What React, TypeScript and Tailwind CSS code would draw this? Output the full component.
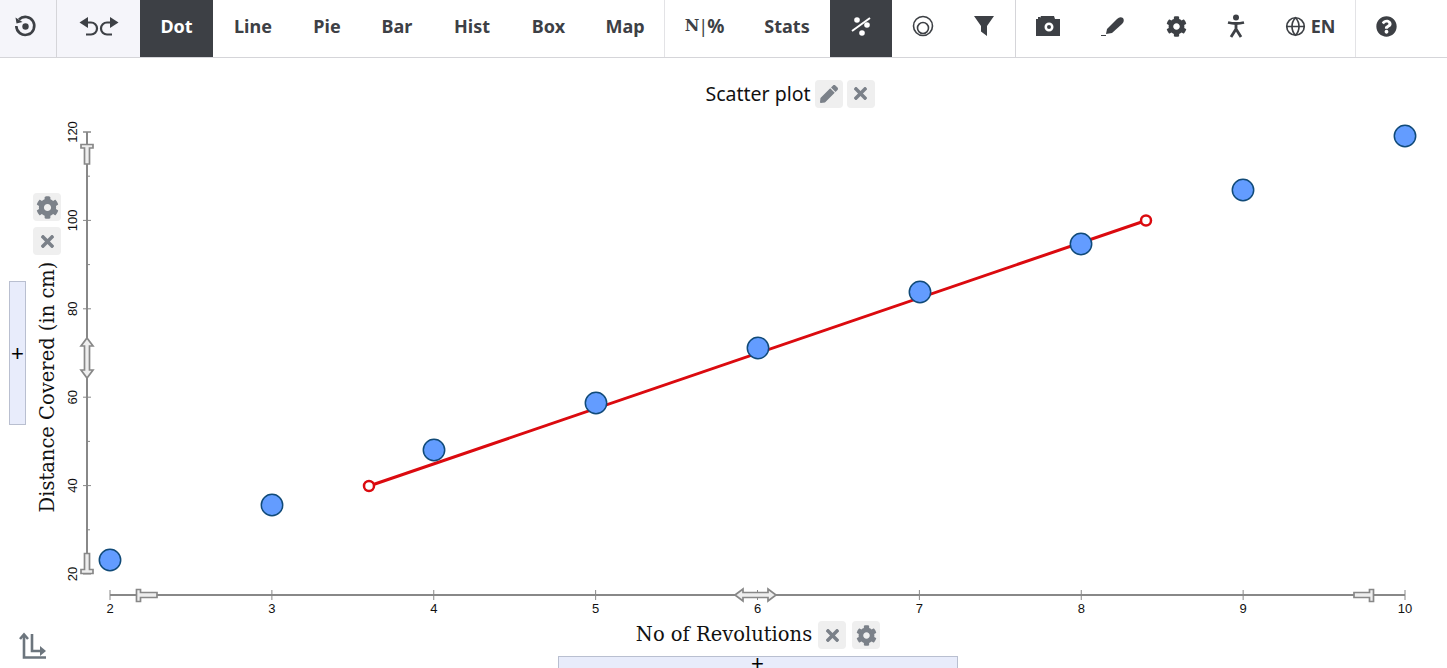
import { FaCog, FaPen, FaQuestionCircle, FaTimes } from "react-icons/fa";
import { Globe } from "lucide-react";
import type { ReactNode } from "react";

const sans = "font-['Noto_Sans',sans-serif]";

const chartTabs = [
  { label: "Dot", width: "w-[73px]", active: true },
  { label: "Line", width: "w-[80px]" },
  { label: "Pie", width: "w-[68px]" },
  { label: "Bar", width: "w-[72px]" },
  { label: "Hist", width: "w-[78px]" },
  { label: "Box", width: "w-[75px]" },
  { label: "Map", width: "w-[78px]" },
];

const points = [
  [110, 560],
  [272, 505],
  [434, 450],
  [596, 403],
  [758, 348],
  [920, 292],
  [1081, 244],
  [1243, 190],
  [1405, 136],
];

const xTicks = [2, 3, 4, 5, 6, 7, 8, 9, 10];
const yTicks = [20, 40, 60, 80, 100, 120];
const yMinor = [30, 50, 70, 90, 110];
const xPos = (v: number) => 110 + (v - 2) * 161.875;
const yPos = (v: number) => 574 - (v - 20) * 4.42;

function Tab({ width, active, children }: { width: string; active?: boolean; children: ReactNode }) {
  return (
    <button
      className={`${width} h-full pb-[5px] flex items-center justify-center shrink-0 ${
        active ? "bg-[#3d4045] text-white" : "text-[#3d4045]"
      }`}
    >
      {children}
    </button>
  );
}

function SmallButton({ children }: { children: ReactNode }) {
  return (
    <div className="w-7 h-7 rounded bg-[#efefef] text-[#7b8189] flex items-center justify-center shrink-0">
      {children}
    </div>
  );
}

function Handle({ d }: { d: string }) {
  return <path d={d} fill="#eeeeee" stroke="#888888" strokeWidth="1.7" />;
}

function Chart() {
  return (
    <svg width="1447" height="500" viewBox="0 120 1447 500" className="block">
      {/* y axis */}
      <line x1="87" y1="132" x2="87" y2="574" stroke="#888888" strokeWidth="2" />
      <line x1="83" y1="132" x2="91" y2="132" stroke="#888888" />
      {yTicks.map((v) => (
        <g key={v}>
          <line x1="83" y1={yPos(v)} x2="91" y2={yPos(v)} stroke="#888888" />
          <text
            transform={`translate(77 ${yPos(v)}) rotate(-90)`}
            textAnchor="middle"
            fontSize="13"
            fontFamily="'Liberation Sans', sans-serif"
            fill="#111111"
          >
            {v}
          </text>
        </g>
      ))}
      {yMinor.map((v) => (
        <line key={v} x1="87" y1={yPos(v)} x2="90" y2={yPos(v)} stroke="#888888" />
      ))}

      {/* x axis */}
      <line x1="110" y1="595" x2="1405" y2="595" stroke="#888888" strokeWidth="2" />
      {xTicks.map((v) => (
        <g key={v}>
          <line x1={xPos(v)} y1="590" x2={xPos(v)} y2="600" stroke="#888888" />
          <text
            x={xPos(v)}
            y="613"
            textAnchor="middle"
            fontSize="13"
            fontFamily="'Liberation Sans', sans-serif"
            fill="#111111"
          >
            {v}
          </text>
        </g>
      ))}

      {/* range handles */}
      <Handle d="M81 144.500h12v3.500h-3.500v16h-5v-16h-3.500z" />
      <Handle d="M84.500 553.500h5v16h3.500v4h-12v-4h3.500z" />
      <Handle d="M87 338l6 8h-3.500v24h3.500l-6 8l-6-8h3.500v-24h-3.500z" />
      <Handle d="M136.500 589.500h4v3h16.500v5h-16.500v4h-4z" />
      <Handle d="M1373.500 589.500h-4v3h-15.500v5h15.500v4h4z" />
      <Handle d="M735 595l8-6v3.500h25v-3.500l8 6l-8 6v-3.500h-25v3.500z" />

      {/* axis title */}
      <text
        transform="translate(54 387) rotate(-90)"
        textAnchor="middle"
        fontSize="19.500"
        fontFamily="'DejaVu Serif', serif"
        fill="#111111"
      >
        Distance Covered (in cm)
      </text>

      {/* regression line */}
      <line x1="369" y1="486" x2="1146" y2="220.500" stroke="#db0a0f" strokeWidth="3" />
      {points.map(([x, y]) => (
        <circle key={x} cx={x} cy={y} r="10.700" fill="#639cff" stroke="#104a78" strokeWidth="1.500" />
      ))}
      <circle cx="369" cy="486" r="5" fill="white" stroke="#db0a0f" strokeWidth="2.500" />
      <circle cx="1146" cy="220.500" r="5" fill="white" stroke="#db0a0f" strokeWidth="2.500" />
    </svg>
  );
}

export default function App() {
  return (
    <div className={`relative w-[1447px] h-[668px] overflow-hidden bg-white ${sans}`}>
      {/* Toolbar */}
      <div className="flex h-[58px] border-b border-[#d5d5d9] text-[18px] font-bold">
        <Tab width="w-[57px] pr-[6px] bg-[#f5f5fa] border-r border-[#d5d5d9]">
          <svg width="24" height="24" viewBox="0 0 24 24" fill="none" stroke="#3d4045" strokeWidth="2.600">
            <path d="M6 5.500A9 9 0 1 1 3.300 12" />
            <path d="M2.500 3.500l1 6l6-1.500z" fill="#3d4045" stroke="none" />
            <circle cx="12.500" cy="12.500" r="3.200" fill="#3d4045" stroke="none" />
          </svg>
        </Tab>
        <Tab width="w-[83px] bg-[#f5f5fa]">
          <svg width="40" height="22" viewBox="0 0 40 22" fill="none" stroke="#3d4045" strokeWidth="2.200">
            <path d="M8 7.500h4a6 6 0 0 1 0 12H7" />
            <path d="M9 2v11L0.500 7.500z" fill="#3d4045" stroke="none" />
            <path d="M32 7.500h-4a6 6 0 0 0 0 12h5" />
            <path d="M31 2v11L39.500 7.500z" fill="#3d4045" stroke="none" />
          </svg>
        </Tab>
        {chartTabs.map((t) => (
          <Tab key={t.label} width={t.width} active={t.active}>
            {t.label}
          </Tab>
        ))}
        <Tab width="w-[80px] border-l border-[#e3e3e6]">
          <span className="font-['DejaVu_Serif',serif] text-[16px]">N</span>
          <span className="-mx-[1px] font-normal">|</span>
          <span className="text-[19px]">%</span>
        </Tab>
        <Tab width="w-[86px]">Stats</Tab>
        <Tab width="w-[62px]" active>
          <svg width="22" height="22" viewBox="0 0 22 22" fill="white">
            <path d="M2 16L20 3" stroke="white" strokeWidth="2" />
            <circle cx="7" cy="5" r="2.800" />
            <circle cx="17" cy="10" r="2.800" />
            <circle cx="12" cy="18" r="2.800" />
          </svg>
        </Tab>
        <Tab width="w-[62px]">
          <svg width="24" height="24" viewBox="0 0 24 24" fill="none" stroke="#3d4045" strokeWidth="1.600">
            <circle cx="12" cy="12" r="9.500" />
            <circle cx="12" cy="14" r="5.500" />
          </svg>
        </Tab>
        <Tab width="w-[61px] pr-[2px]">
          <svg width="22" height="22" viewBox="0 0 22 22" fill="#3d4045">
            <path d="M1 1h20l-7 10v10l-6-4.500v-5.500z" />
          </svg>
        </Tab>
        <Tab width="w-[65px] border-l border-[#d5d5d9]">
          <svg width="24" height="20" viewBox="0 0 24 20" fill="#3d4045">
            <path
              fillRule="evenodd"
              d="M0 3h2V1h2V2l1-2h13l1 3h5v17H0zM13 6.500a4.500 4.500 0 1 0 0 9a4.500 4.500 0 0 0 0-9zM13 9a2 2 0 1 1 0 4a2 2 0 0 1 0-4z"
            />
          </svg>
        </Tab>
        <Tab width="w-[65px]">
          <svg width="26" height="22" viewBox="0 0 26 22" fill="#3d4045">
            <path d="M6 19l1-5L17 4q3-3 6-1q2 3-1 6L12 18z" />
            <path d="M1 20.500h5" stroke="#3d4045" strokeWidth="1" />
          </svg>
        </Tab>
        <Tab width="w-[62px]">
          <FaCog size={21} />
        </Tab>
        <Tab width="w-[58px]">
          <svg width="20" height="24" viewBox="0 0 20 24" fill="none" stroke="#3d4045" strokeWidth="2.800">
            <circle cx="10" cy="3.500" r="3" fill="#3d4045" stroke="none" />
            <path d="M2 8.500q8 2 16 0" />
            <path d="M10 9v6l-5 8M10 15l5 8" />
          </svg>
        </Tab>
        <Tab width="w-[90px]">
          <span className="flex items-center gap-[5px]">
            <Globe size={21} strokeWidth={1.900} />
            EN
          </span>
        </Tab>
        <Tab width="w-[62px] border-l border-[#e3e3e6]">
          <FaQuestionCircle size={21} />
        </Tab>
      </div>

      {/* Title */}
      <div className="flex h-[62px] items-center justify-center pt-[9px] pl-[133px]">
        <span className="text-[19.5px] text-[#111] mr-[4px]">Scatter plot</span>
        <div className="flex gap-1">
          <SmallButton>
            <FaPen size={18} />
          </SmallButton>
          <SmallButton>
            <FaTimes size={19} />
          </SmallButton>
        </div>
      </div>

      <Chart />

      {/* X axis title */}
      <div className="flex h-[30px] items-center justify-center gap-[6px] pl-[69px]">
        <span className="font-['DejaVu_Serif',serif] text-[19.5px] text-[#111]">No of Revolutions</span>
        <SmallButton>
          <FaTimes size={19} />
        </SmallButton>
        <SmallButton>
          <FaCog size={21} />
        </SmallButton>
      </div>

      {/* Add bar, bottom */}
      <div className="pl-[68px] mt-[6px]">
        <div className="mx-auto w-[400px] h-[30px] bg-[#e8ecfb] border border-[#b9bfd0] text-center font-['Liberation_Sans',sans-serif] text-[22px] leading-[14px] text-black">
          +
        </div>
      </div>

      {/* Add bar, left */}
      <div className="absolute left-[9px] top-[281px] w-[17px] h-[144px] bg-[#e8ecfb] border border-[#b9bfd0] flex items-center justify-center font-['Liberation_Sans',sans-serif] text-[22px] text-black">
        +
      </div>

      {/* Y axis buttons */}
      <div className="absolute left-[33px] top-[193px] flex flex-col gap-[6px]">
        <SmallButton>
          <FaCog size={23} />
        </SmallButton>
        <SmallButton>
          <FaTimes size={19} />
        </SmallButton>
      </div>

      {/* Swap axes */}
      <svg
        className="absolute left-[18px] top-[632px]"
        width="30"
        height="30"
        viewBox="0 0 30 30"
        fill="none"
        stroke="#6c757d"
        strokeWidth="2.600"
      >
        <path d="M6 3v22.500h22" />
        <path d="M2 7l4-4.500l4 4.500" />
        <path d="M14 2v17h11" />
        <path d="M22 14l6 5l-6 5" fill="#6c757d" stroke="none" />
      </svg>
    </div>
  );
}
